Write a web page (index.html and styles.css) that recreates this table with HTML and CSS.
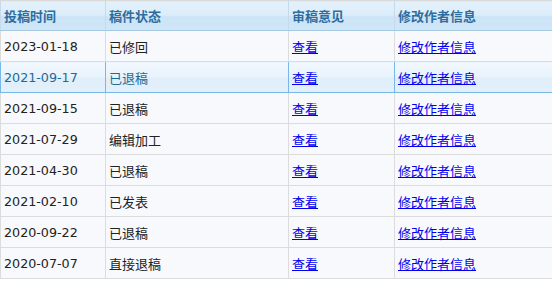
FILE: index.html
```html
<!DOCTYPE html>
<html>
<head>
<meta charset="utf-8">
<link rel="stylesheet" href="styles.css">
</head>
<body>
<table class="grid">
  <thead>
    <tr>
      <th class="c1">投稿时间</th>
      <th class="c2">稿件状态</th>
      <th class="c3">审稿意见</th>
      <th class="c4">修改作者信息</th>
    </tr>
  </thead>
  <tbody>
    <tr><td>2023-01-18</td><td>已修回</td><td><a href="#">查看</a></td><td><a href="#">修改作者信息</a></td></tr>
    <tr class="hover"><td>2021-09-17</td><td>已退稿</td><td><a href="#">查看</a></td><td><a href="#">修改作者信息</a></td></tr>
    <tr><td>2021-09-15</td><td>已退稿</td><td><a href="#">查看</a></td><td><a href="#">修改作者信息</a></td></tr>
    <tr><td>2021-07-29</td><td>编辑加工</td><td><a href="#">查看</a></td><td><a href="#">修改作者信息</a></td></tr>
    <tr><td>2021-04-30</td><td>已退稿</td><td><a href="#">查看</a></td><td><a href="#">修改作者信息</a></td></tr>
    <tr><td>2021-02-10</td><td>已发表</td><td><a href="#">查看</a></td><td><a href="#">修改作者信息</a></td></tr>
    <tr><td>2020-09-22</td><td>已退稿</td><td><a href="#">查看</a></td><td><a href="#">修改作者信息</a></td></tr>
    <tr><td>2020-07-07</td><td>直接退稿</td><td><a href="#">查看</a></td><td><a href="#">修改作者信息</a></td></tr>
  </tbody>
</table>
</body>
</html>
```

FILE: styles.css
```css
html, body {
  margin: 0;
  padding: 0;
  background: #ffffff;
}
.grid {
  border-collapse: collapse;
  width: 553px;
  table-layout: fixed;
  font-family: "DejaVu Sans", "Noto Sans CJK SC", sans-serif;
  font-size: 12.7px;
  color: #222222;
}
.grid th, .grid td {
  height: 31px;
  padding: 0 0 0 3px;
  text-align: left;
  vertical-align: middle;
  white-space: nowrap;
  box-sizing: border-box;
}
.grid th {
  height: 30px;
  font-size: 13px;
  font-weight: bold;
  color: #2e6e9e;
  border: 1px solid #c5dbec;
  border-top: 1px solid #dadada;
  border-bottom: 1px solid #a6c9e2;
  background: linear-gradient(to bottom, #e4f1fb 0%, #dbedfb 48%, #cbe4f7 52%, #cfe6f7 100%);
}
.grid td {
  border: 1px solid #dcdcdc;
  background: #f8f9fc;
}
.grid td + td {
  font-size: 13px;
}
.c1 { width: 105px; }
.c2 { width: 183px; }
.c3 { width: 106px; }
.c4 { width: 159px; }
.grid tr.hover td {
  border: 1px solid #79b7e7;
  color: #1d6a96;
  background: linear-gradient(to bottom, #f1f7fd 0%, #e8f3fc 48%, #dfeefa 52%, #e3f0fb 100%);
}
.grid a {
  color: #0000ee;
  text-decoration: underline;
}
```
